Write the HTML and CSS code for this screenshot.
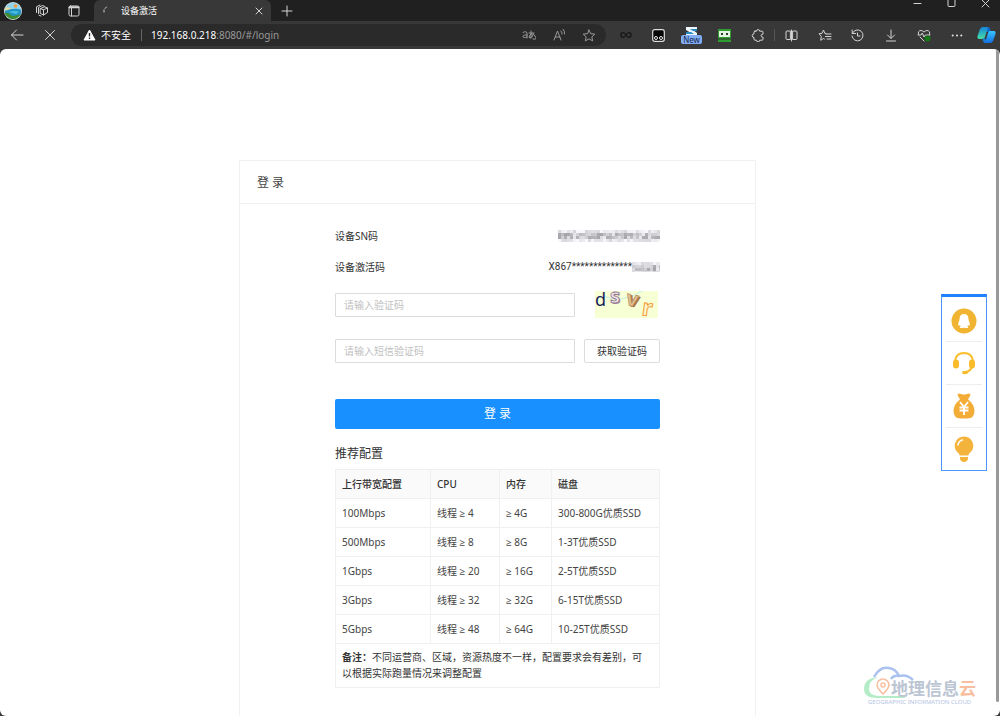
FILE: index.html
```html
<!DOCTYPE html>
<html lang="zh-CN">
<head>
<meta charset="utf-8">
<meta name="viewport" content="width=device-width, initial-scale=1">
<title>设备激活</title>
<link rel="stylesheet" href="styles.css">
</head>
<body>
<div class="window">
  <header class="tabstrip">
    <button class="tool tool-avatar" aria-label="个人资料">
      <svg width="20" height="20" viewBox="0 0 20 20"><defs><clipPath id="face"><circle cx="10" cy="10" r="8.3"/></clipPath></defs><circle cx="10" cy="10" r="9" fill="#d9dfe0"/><g clip-path="url(#face)"><path fill="#8fd4ea" d="M0 0h20v20H0z"/><circle cx="12.500" cy="5" r="1.800" fill="#f49a3c"/><path fill="#e8d9a0" d="M0 8q4-3 7-1l4 2H0z"/><path fill="#2593c4" d="M2 10q9-4 17-1v6H2z"/><path fill="#49bfe0" d="M6 11q6-2 10 0l-3 2z"/><path fill="#3f8d2f" d="M0 12q6-1 9 3 4 0 10-2v7H0z"/></g></svg>
    </button>
    <button class="tool" aria-label="工作区">
      <svg width="14" height="14" viewBox="0 0 14 14" class="line"><path d="M5.500 4.500 9.500 2.800l3 1.200v4.500L8.500 11 5.500 9.500zM5.500 4.500l3 1.300 4-1.800M8.500 5.800V11M3.500 9.500V3.500l4-2 2 .8M6 12l-2-.8M1.500 8.500V2.800L5 1"/></svg>
    </button>
    <button class="tool" aria-label="标签页操作">
      <svg width="12" height="12" viewBox="0 0 12 12" class="line"><rect x="1" y="1" width="10" height="10" rx="1.500"/><path d="M1.500 2.300h9" stroke-width="2"/><path d="M3.500 3v8"/></svg>
    </button>
    <div class="tab">
      <svg width="6" height="10" viewBox="0 0 6 10" class="line"><path d="M4.500 1 3 2.500M2 4v2" /></svg>
      <span class="tab-title">设备激活</span>
      <button class="tab-close" aria-label="关闭标签页"><svg width="8" height="8" viewBox="0 0 8 8" class="line"><path d="m1 1 6 6M7 1 1 7"/></svg></button>
    </div>
    <button class="tool" aria-label="新建标签页"><svg width="12" height="12" viewBox="0 0 12 12" class="line"><path d="M6 1v10M1 6h10"/></svg></button>
    <div class="controls">
      <button class="control" aria-label="最小化"><svg width="9" height="9" viewBox="0 0 9 9" class="line"><path d="M1 3.500h7"/></svg></button>
      <button class="control" aria-label="最大化"><svg width="9" height="9" viewBox="0 0 9 9" class="line"><path d="M1 0v5.500q0 1 1 1h5q1 0 1-1V0"/></svg></button>
      <button class="control" aria-label="关闭"><svg width="9" height="9" viewBox="0 0 9 9" class="line"><path d="m1 0 7 7M8 0 1 7"/></svg></button>
    </div>
  </header>

  <nav class="toolbar">
    <button class="tool" aria-label="后退"><svg width="14" height="12" viewBox="0 0 14 12" class="line"><path d="M13 6H1.500M6.500 1l-5 5 5 5"/></svg></button>
    <button class="tool" aria-label="停止"><svg width="12" height="12" viewBox="0 0 12 12" class="line"><path d="m1.500 1.500 9 9M10.500 1.500l-9 9"/></svg></button>
    <div class="address">
      <svg width="13" height="12" viewBox="0 0 13 12"><path fill="#fff" stroke="#fff" stroke-linejoin="round" d="M6.500 1 12 11H1z"/><path stroke="#2b2b2b" stroke-width="1.400" d="M6.500 4v3.500M6.500 8.500v1.400"/></svg>
      <span class="unsafe">不安全</span>
      <span class="url">192.168.0.218<span class="url-rest">:8080/#/login</span></span>
      <button class="tool tool-small" aria-label="翻译"><svg width="14" height="10" viewBox="0 0 14 10" class="line dim"><path d="M1 2.500q3-2 4 .5V8M5 5Q1 4.500 1 6.500T5 7M7 3h5M9 1v7M11.500 4Q10 8 8 8T8 5t5 1-2 3"/></svg></button>
      <button class="tool tool-small" aria-label="大声朗读"><svg width="13" height="12" viewBox="0 0 13 12" class="line dim"><path d="m1 11 3.500-9L8 11M2.300 8h4.500M8 2q1.300 1 1 3M10 0q2 2 1.500 5"/></svg></button>
      <button class="tool tool-small" aria-label="收藏"><svg width="14" height="13" viewBox="0 0 14 13" class="line dim"><path d="m7 1 1.700 3.700 4.100.4-3 2.800.9 4L7 9.900l-3.700 2 .9-4-3-2.800 4.100-.4z"/></svg></button>
    </div>
    <button class="tool" aria-label="扩展"><svg width="12" height="8" viewBox="0 0 12 8" fill="none" stroke="#171717" stroke-width="1.300"><path d="M6 4Q4.500 1.700 3.200 1.700a2.300 2.300 0 0 0 0 4.600Q4.500 6.300 6 4t2.800-2.300a2.300 2.300 0 0 1 0 4.600Q7.500 6.300 6 4z"/></svg></button>
    <button class="tool" aria-label="脚本管理器"><svg width="13" height="13" viewBox="0 0 13 13"><rect x=".7" y=".7" width="11.600" height="11.600" rx="2" fill="#050505" stroke="#ddd" stroke-width="1.200"/><circle cx="4" cy="9" r="1.500" fill="none" stroke="#eee"/><circle cx="9" cy="9" r="1.500" fill="none" stroke="#eee"/></svg></button>
    <button class="tool tool-new" aria-label="新扩展"><svg width="13" height="8" viewBox="0 0 13 8"><path fill="#eef6fb" d="M1 0h11v3H8l4 3v2H1V6h5L1 3z"/><path fill="#2588be" d="M5 2h7v2H8zM1 5h5l3 2H1z"/></svg><span class="badge">New</span></button>
    <button class="tool" aria-label="密码助手"><svg width="13" height="13" viewBox="0 0 13 13"><path fill="#2f9c31" d="M0 0h13v13H0z"/><path fill="#e6f2e2" d="M1 2h11v6H1z"/><path fill="#27402a" d="M3 4h2v2H3zM8 4h2v2H8z"/><path fill="#353535" d="M0 9.500h13v1H0z"/></svg></button>
    <button class="tool" aria-label="管理扩展"><svg width="14" height="13" viewBox="0 0 14 13" class="line"><path d="M4 2.200h1.500a1.600 1.600 0 0 1 3.200 0H11q1 0 1 1v1.900q-2 0-2 1.500T12 8.200v2q0 1-1 1H8.700a1.600 1.600 0 0 1-3.200 0H4q-1 0-1-1V8.500a1.800 1.800 0 0 1 0-3.600V3.200q0-1 1-1z"/></svg></button>
    <span class="divider"></span>
    <button class="tool" aria-label="拆分屏幕"><svg width="13" height="13" viewBox="0 0 13 13" class="line"><path d="M5 2H2Q1 2 1 3v6.500q0 1 1 1h3zM8 2h3q1 0 1 1v6.500q0 1-1 1H8zM6.500 1v11"/></svg></button>
    <button class="tool" aria-label="收藏夹"><svg width="14" height="13" viewBox="0 0 14 13" class="line"><path d="m8 4.500-1.200-.2L5.500 1 4 4.300l-3 .5 2.300 2.500-.6 4L5.500 9.500l1 .6M8 5h5M7.500 7.500H13M9 10h4"/></svg></button>
    <button class="tool" aria-label="历史记录"><svg width="13" height="13" viewBox="0 0 13 13" class="line"><path d="M1.200 1v3.500h3.500M1.300 4.500A5.500 5.500 0 1 1 1 7M6.500 4v3H9"/></svg></button>
    <button class="tool" aria-label="下载"><svg width="12" height="13" viewBox="0 0 12 13" class="line"><path d="M6 1v8M2.500 6 6 9.500 9.500 6M1.500 12h9"/></svg></button>
    <button class="tool" aria-label="浏览器概要"><svg width="14" height="13" viewBox="0 0 14 13" class="line"><path d="M1.500 5.500Q.5 1.500 4 1.500q2 0 3 1.700 1-1.700 3-1.700 3.500 0 2.500 4M1 6h3l1.300-2L7 8l1.300-2H13M3 8l4 4"/><circle cx="10.500" cy="9.500" r="3" fill="#167516" stroke="none"/></svg></button>
    <button class="tool" aria-label="更多"><svg width="12" height="3" viewBox="0 0 12 3" fill="#e5e5e5"><circle cx="1.700" cy="1.500" r="1"/><circle cx="6" cy="1.500" r="1"/><circle cx="10.300" cy="1.500" r="1"/></svg></button>
    <button class="tool tool-copilot" aria-label="Copilot"><svg width="19" height="18" viewBox="0 0 19 18"><defs><linearGradient id="left" x1="0" y1="0" x2="0" y2="1"><stop stop-color="#1685d8"/><stop offset="1" stop-color="#45dfa4"/></linearGradient><linearGradient id="right" x1="0" y1="0" x2="0" y2="1"><stop stop-color="#38c5ff"/><stop offset="1" stop-color="#126ee2"/></linearGradient></defs><path fill="#1268c8" d="M7 1h4q2 0 2 2l1 3H9z"/><path fill="url(#left)" d="M6 1h5L8 11q-.5 2-3 2H2q-2 0-1.500-3L3 3q.8-2 3-2z"/><path fill="#187ad3" d="m8 12 2 5q-3 1-4-2l-.5-2z"/><path fill="url(#right)" d="M13 5h4q2 0 1.500 3L16 15q-.8 2-3 2H8l3-10q.5-2 2-2z"/></svg></button>
  </nav>

  <main class="page">
    <section class="card">
      <h1 class="card-head">登 录</h1>
      <form class="form">
        <div class="info"><span>设备SN码</span><svg class="mosaic" width="102" height="12" viewBox="0 0 102 12" role="img" aria-label="已隐藏" data-seed="7"></svg></div>
        <div class="info"><span>设备激活码</span><span class="code">X867**************<svg class="mosaic" width="28" height="10" viewBox="0 0 28 10" role="img" aria-label="已隐藏" data-seed="3"></svg></span></div>
        <div class="row row-captcha">
          <input class="field" type="text" placeholder="请输入验证码" aria-label="验证码">
          <svg class="captcha" width="63" height="27" viewBox="0 0 63 27" role="img" aria-label="图形验证码"><path fill="#f7ffd5" d="M0 0h63v27H0z"/><path d="M7 5q20 8 40-5" fill="none" stroke="#c4f1e5"/><text x="0" y="15" font-size="18" fill="#17265b">d</text><text x="16" y="13" font-size="20" font-weight="bold" fill="#a58ba0">s</text><text x="15" y="12" font-size="20" font-weight="bold" fill="#f1e6ea" stroke="#8c718b" stroke-width=".8">s</text><text x="33" y="16" font-size="21" font-weight="bold" fill="#a8703f" transform="rotate(12 38 10)">v</text><text x="31" y="15" font-size="21" font-weight="bold" fill="#ddbd93" stroke="#b98a5a" stroke-width=".6" transform="rotate(12 37 10)">v</text><text x="47" y="25" font-size="23" font-weight="bold" fill="#fff4ca" stroke="#f19b38" transform="rotate(8 53 20)">r</text></svg>
        </div>
        <div class="row row-sms">
          <input class="field" type="text" placeholder="请输入短信验证码" aria-label="短信验证码">
          <button class="button" type="button">获取验证码</button>
        </div>
        <button class="submit" type="button">登 录</button>
      </form>
      <div class="specs">
        <h2 class="specs-title">推荐配置</h2>
        <table class="table">
          <colgroup><col class="col-band"><col class="col-cpu"><col class="col-mem"><col></colgroup>
          <thead><tr><th>上行带宽配置</th><th>CPU</th><th>内存</th><th>磁盘</th></tr></thead>
          <tbody>
            <tr><td>100Mbps</td><td>线程 ≥ 4</td><td>≥ 4G</td><td>300-800G优质SSD</td></tr>
            <tr><td>500Mbps</td><td>线程 ≥ 8</td><td>≥ 8G</td><td>1-3T优质SSD</td></tr>
            <tr><td>1Gbps</td><td>线程 ≥ 20</td><td>≥ 16G</td><td>2-5T优质SSD</td></tr>
            <tr><td>3Gbps</td><td>线程 ≥ 32</td><td>≥ 32G</td><td>6-15T优质SSD</td></tr>
            <tr><td>5Gbps</td><td>线程 ≥ 48</td><td>≥ 64G</td><td>10-25T优质SSD</td></tr>
            <tr><td colspan="4" class="note"><b>备注：</b>不同运营商、区域，资源热度不一样，配置要求会有差别，可以根据实际跑量情况来调整配置</td></tr>
          </tbody>
        </table>
      </div>
    </section>

    <aside class="dock">
      <button class="dock-item" aria-label="QQ客服"><svg width="26" height="26" viewBox="0 0 26 26"><circle cx="13" cy="13" r="12.500" fill="#f0b432"/><path fill="#fff" d="M13 6q4.300 0 4.500 5 0 1.500.8 3 1.200 2.500.2 4l-1.500-1-.5 1.500 1 1.500h-3.500l-1-.5-1 .5H8.500l1-1.500L9 17l-1.500 1q-1-1.500.2-4 .8-1.500.8-3Q8.700 6 13 6z"/></svg></button>
      <button class="dock-item" aria-label="在线客服"><svg width="24" height="24" viewBox="0 0 24 24"><path fill="none" stroke="#f9bd2c" stroke-width="2" d="M3 10Q4 2 12 2t9 8M20 15q-1 5-6 6"/><rect x="1" y="8.500" width="6" height="9" rx="3" fill="#f9bd2c"/><rect x="17" y="8.500" width="6" height="9" rx="3" fill="#f9bd2c"/><ellipse cx="13" cy="21.500" rx="3" ry="1.700" fill="#f9bd2c"/></svg></button>
      <button class="dock-item" aria-label="价格"><svg width="24" height="26" viewBox="0 0 24 26"><path fill="#f3ad37" d="M6 1q1.500-1 3 0 3 1 6 0 1.500-1 3 0 1 .5 0 2l-2 3.500q6 4.500 6.500 11 0 8-7 8h-7q-7 0-7-8Q2 11 8 6.500L6 3Q5 1.500 6 1z"/><path fill="none" stroke="#fff" stroke-width="1.800" d="m8 9 4 5 4-5M7.500 14.500h9M7.500 17.500h9M12 14v8"/></svg></button>
      <button class="dock-item" aria-label="建议"><svg width="20" height="26" viewBox="0 0 20 26"><path fill="#f4b33a" d="M10 .5a9.300 9.300 0 0 1 6 16.300q-1.500 1.200-1.700 2.700H5.700Q5.500 18 4 16.800A9.300 9.300 0 0 1 10 .5zM6 21h8v2q-1 3-4 3t-4-3z"/><path fill="none" stroke="#fff" stroke-width="1.500" stroke-linecap="round" d="M4 9q.5-4 4.500-5"/></svg></button>
    </aside>

    <div class="brand">
      <div class="brand-row">
        <svg class="brand-mark" width="54" height="34" viewBox="0 0 54 34" fill="none"><path stroke="#abc1ef" stroke-width="2.500" d="M11 12Q17 1 26 3q7 1 10 8 8-2 14 4M28 14q2-4 8-3"/><path fill="#b5ecc8" d="M15 12Q1 13 1 24q0 9 13 9h28v-2H17Q6 31 6 24 6 15 15 12z"/><path stroke="#f7bfa0" stroke-width="1.600" d="M20 29q-6-6-6-9a6 6 0 0 1 12 0q0 3-6 9z"/><circle cx="20" cy="20" r="2" stroke="#f7bfa0" stroke-width="1.500"/></svg>
        <span class="brand-name">地理信息<span class="brand-cloud">云</span></span>
      </div>
      <span class="brand-sub">GEOGRAPHIC INFORMATION CLOUD</span>
    </div>
    <span class="scroll"></span>
  </main>
</div>
<script src="app.js"></script>
</body>
</html>
```

FILE: styles.css
```css
* { box-sizing: border-box; }
body {
  margin: 0;
  background: #383838;
  color: #444;
  font: 10px/16px "Noto Sans", "Open Sans", "Noto Sans CJK SC", sans-serif;
}
button, input { font: inherit; color: inherit; }
button { padding: 0; border: 0; background: none; }
svg { display: block; flex: none; }
.line { fill: none; stroke: #d4d4d4; stroke-width: 1; stroke-linecap: round; stroke-linejoin: round; }
.dim { stroke: #999; }

.window { display: flex; flex-direction: column; height: 100vh; overflow: hidden; }
.tabstrip { display: flex; height: 21px; background: #202020; }
.tool { display: flex; flex: none; align-items: center; justify-content: center; width: 32px; }
.tool-avatar { width: 26px; }
.tab {
  display: flex;
  align-items: center;
  width: 177px;
  margin-left: 4px;
  padding: 0 8px;
  border-radius: 6px 6px 0 0;
  background: #383838;
  color: #fff;
  font-size: 9px;
}
.tab-title { flex: 1; margin-left: 13px; }
.controls { display: flex; gap: 4px; margin-left: auto; }
.control { display: flex; justify-content: center; width: 30px; }

.toolbar { display: flex; height: 28px; background: #383838; }
.toolbar .tool { width: 33px; }
.address {
  display: flex;
  flex: 1;
  align-items: center;
  min-width: 0;
  margin: 3px 3px 3px 5px;
  padding: 0 2px 0 12px;
  border-radius: 12px;
  background: #2a2a2a;
  color: #fff;
}
.toolbar .tool-small { width: 30px; }
.toolbar .tool-copilot { width: 27px; }
.unsafe { margin-left: 5px; padding-right: 10px; border-right: 1px solid #666; line-height: 12px; }
.url { flex: 1; margin-left: 9px; white-space: nowrap; }
.url-rest { color: #999; }
.divider { width: 1px; margin: 8px 0; background: #555; }
.toolbar .tool-new { flex-direction: column; }
.badge { padding: 0 2px; border-radius: 2px; background: #82adf5; color: #17284b; font-size: 8px; line-height: 9px; }

.page {
  position: relative;
  display: flex;
  flex: 1;
  flex-direction: column;
  align-items: center;
  min-height: 0;
  padding: 111px 5px 0 0;
  border-radius: 6px;
  background: #fff;
  overflow: hidden;
}
.card {
  flex: 1 0 auto;
  width: 100%;
  max-width: 517px;
  border: 1px solid #f1f1f1;
  border-bottom: 0;
}
.card-head {
  margin: 0;
  padding: 12px 17px 10px;
  border-bottom: 1px solid #f1f1f1;
  font-size: 12px;
  font-weight: 400;
  line-height: 20px;
}
.form, .specs { max-width: 325px; margin: 0 auto; }
.form { padding-top: 16px; }
.info { display: flex; align-items: center; justify-content: space-between; height: 31px; }
.info span { color: #333; }
.code { display: flex; align-items: center; font-family: Roboto, sans-serif; }
.row { display: flex; align-items: center; justify-content: space-between; }
.row-captcha { margin-top: 9px; padding-right: 2px; }
.row-sms { margin-top: 21px; }
.field {
  width: 240px;
  height: 24px;
  padding: 0 8px;
  border: 1px solid #dcdcdc;
  border-radius: 1px;
  background: #fff;
}
.field::placeholder { color: #bfbfbf; opacity: 1; }
.captcha { overflow: visible; font-family: "Noto Sans", sans-serif; }
.button { width: 76px; height: 24px; border: 1px solid #dcdcdc; border-radius: 2px; background: #fff; color: #333; }
.submit {
  display: block;
  width: 100%;
  height: 30px;
  margin-top: 36px;
  border-radius: 2px;
  background: #1890ff;
  color: #fff;
  font-size: 12px;
}
.specs-title { margin: 0; padding: 15px 0 5px; color: #333; font-size: 12px; font-weight: 400; line-height: 20px; }
.table { width: 100%; border-collapse: collapse; table-layout: fixed; }
.col-band { width: 95px; }
.col-cpu { width: 69px; }
.col-mem { width: 52px; }
.table th, .table td { padding: 6px; border: 1px solid #f0f0f0; text-align: left; }
.table th { background: #fafafa; color: #333; font-weight: 500; }
.table .note { padding: 5px 12px 6px 6px; color: #333; }

.dock {
  position: absolute;
  top: 245px;
  right: 13px;
  width: 46px;
  padding: 0 4px;
  border: 1px solid #4b97ff;
  border-top: 3px solid #2080ff;
  background: #fff;
}
.dock-item { display: flex; align-items: center; justify-content: center; width: 100%; height: 44px; padding-top: 4px; }
.dock-item + .dock-item { height: 43px; padding: 0; border-top: 1px solid #eee; }
.brand { position: absolute; right: 24px; bottom: 11px; }
.brand-row { display: flex; align-items: flex-end; }
.brand-mark { margin-right: -26px; }
.brand-name { color: #bcc5d3; font-size: 17px; font-weight: 700; line-height: 20px; }
.brand-cloud { color: #f7bfa0; }
.brand-sub { display: block; padding-left: 5px; color: #b5c4e3; font-size: 6px; line-height: 6px; white-space: nowrap; }
.scroll { position: absolute; top: 0; right: 1px; bottom: 14px; width: 3px; border-radius: 2px; background: #999; }
```

FILE: app.js
```js
// Fills the hidden parts of the device codes with a mosaic.
document.querySelectorAll('.mosaic').forEach(function (svg) {
  var seed = Number(svg.dataset.seed);
  var width = svg.viewBox.baseVal.width;
  var height = svg.viewBox.baseVal.height;
  var size = 3;
  for (var y = 0; y < height; y += size) {
    for (var x = 0; x < width; x += size) {
      seed = (seed * 1103 + 377) % 7919;
      var edge = y === 0 || y + size >= height;
      var tone = (edge ? 215 : 165) + seed % (edge ? 35 : 70);
      var rect = document.createElementNS('http://www.w3.org/2000/svg', 'rect');
      rect.setAttribute('x', x);
      rect.setAttribute('y', y);
      rect.setAttribute('width', size);
      rect.setAttribute('height', size);
      rect.setAttribute('fill', 'rgb(' + tone + ',' + tone + ',' + (tone + 4) + ')');
      svg.appendChild(rect);
    }
  }
});
```
